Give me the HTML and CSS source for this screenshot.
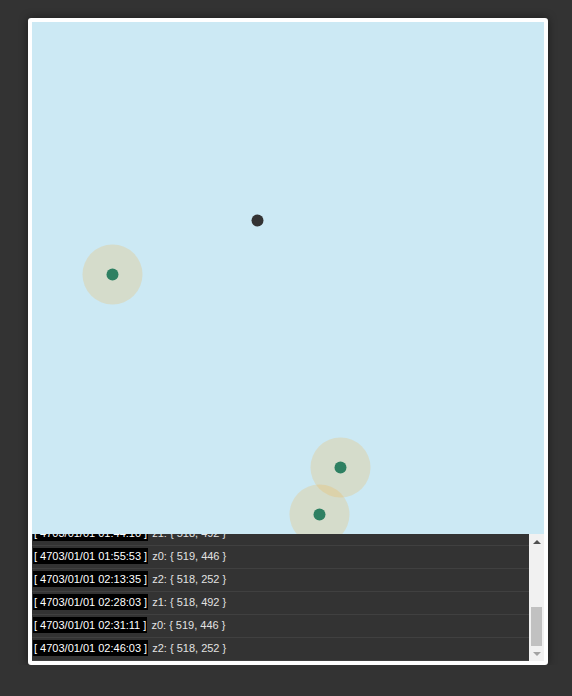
FILE: index.html
```html
<!DOCTYPE html>
<html>
<head>
<meta charset="utf-8">
<link rel="stylesheet" href="styles.css">
</head>
<body>
<div class="card">
  <div class="map">
    <svg class="layer" width="512" height="512" viewBox="0 0 512 512">
      <circle cx="225.5" cy="198.5" r="6" class="me"/>
      <circle cx="80.5" cy="252.5" r="30" class="zone"/>
      <circle cx="308.5" cy="445.5" r="30" class="zone"/>
      <circle cx="287.5" cy="492.5" r="30" class="zone"/>
      <circle cx="80.5" cy="252.5" r="6" class="pin"/>
      <circle cx="308.5" cy="445.5" r="6" class="pin"/>
      <circle cx="287.5" cy="492.5" r="6" class="pin"/>
    </svg>
  </div>
  <div class="log">
    <div class="rows">
      <div class="row"><span class="ts">[ 4703/01/01 01:02:44 ]</span> z1: { 518, 492 }</div>
      <div class="row"><span class="ts">[ 4703/01/01 01:15:30 ]</span> z0: { 519, 446 }</div>
      <div class="row"><span class="ts">[ 4703/01/01 01:29:58 ]</span> z2: { 518, 252 }</div>
      <div class="row"><span class="ts">[ 4703/01/01 01:44:10 ]</span> z1: { 518, 492 }</div>
      <div class="row"><span class="ts">[ 4703/01/01 01:55:53 ]</span> z0: { 519, 446 }</div>
      <div class="row"><span class="ts">[ 4703/01/01 02:13:35 ]</span> z2: { 518, 252 }</div>
      <div class="row"><span class="ts">[ 4703/01/01 02:28:03 ]</span> z1: { 518, 492 }</div>
      <div class="row"><span class="ts">[ 4703/01/01 02:31:11 ]</span> z0: { 519, 446 }</div>
      <div class="row"><span class="ts">[ 4703/01/01 02:46:03 ]</span> z2: { 518, 252 }</div>
    </div>
    <div class="scrollbar">
      <div class="btn"><span class="arrow-up"></span></div>
      <div class="track"><div class="thumb"></div></div>
      <div class="btn"><span class="arrow-down"></span></div>
    </div>
  </div>
</div>
</body>
</html>
```
FILE: styles.css
```css
html, body {
  margin: 0;
  background: #333333;
}
body {
  padding: 18px 0 0 28px;
  font-family: "Liberation Sans", Arial, sans-serif;
}
.card {
  width: 512px;
  background: #ffffff;
  border: 4px solid #ffffff;
  border-radius: 3px;
  box-shadow: 0 0 10px rgba(0, 0, 0, 0.45);
}
.map {
  width: 512px;
  height: 512px;
  background: #cce9f4;
  overflow: hidden;
}
.layer {
  display: block;
}
.me { fill: #333333; }
.zone { fill: rgba(250, 170, 40, 0.2); }
.pin { fill: #2e8062; }
.log {
  height: 127px;
  display: flex;
  background: #333333;
}
.rows {
  flex: 1;
  display: flex;
  flex-direction: column;
  justify-content: flex-end;
  overflow: hidden;
}
.row {
  flex: none;
  height: 22px;
  line-height: 20px;
  border-bottom: 1px solid #404040;
  font-size: 11px;
  color: #e2e2e2;
  white-space: nowrap;
}
.ts {
  background: #000000;
  color: #ffffff;
  padding: 2px 1px;
  margin-left: 1px;
  margin-right: 1px;
}
.scrollbar {
  width: 15px;
  flex: none;
  background: #f1f1f1;
  display: flex;
  flex-direction: column;
}
.btn {
  height: 15px;
  flex: none;
  display: flex;
  align-items: center;
  justify-content: center;
}
.arrow-up {
  width: 0;
  height: 0;
  border-left: 4px solid transparent;
  border-right: 4px solid transparent;
  border-bottom: 4px solid #505050;
}
.arrow-down {
  width: 0;
  height: 0;
  border-left: 4px solid transparent;
  border-right: 4px solid transparent;
  border-top: 4px solid #a3a3a3;
}
.track {
  flex: 1;
  display: flex;
  flex-direction: column;
  justify-content: flex-end;
  padding: 0 2px;
}
.thumb {
  height: 39px;
  background: #c1c1c1;
}
```
